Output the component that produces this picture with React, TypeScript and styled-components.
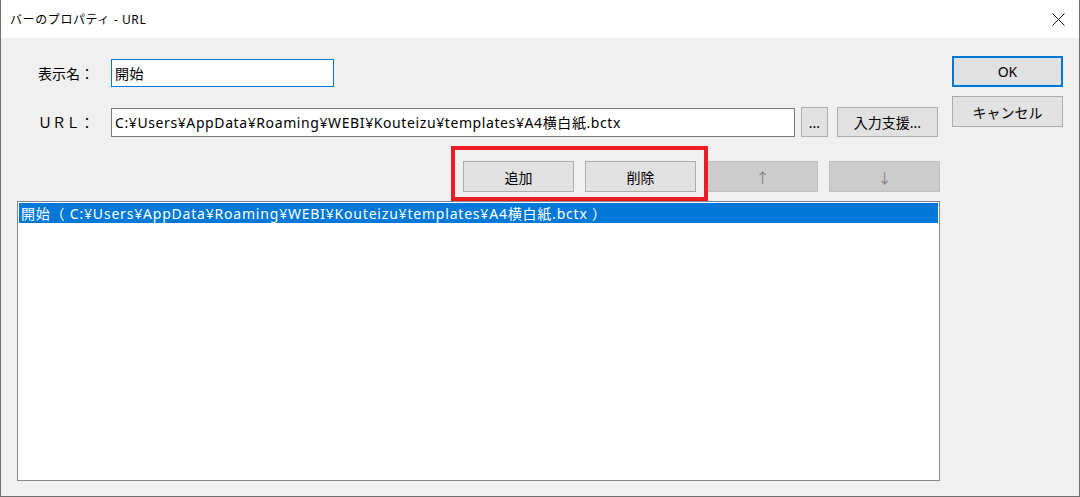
import React from 'react'
import styled, { createGlobalStyle } from 'styled-components'

const GlobalStyle = createGlobalStyle`
  html, body {
    margin: 0;
    padding: 0;
    background: #ffffff;
  }
  body {
    font-family: "Noto Sans", "Noto Sans CJK JP", sans-serif;
    font-size: 14px;
    color: #000000;
  }
`

const Window = styled.div`
  width: 1080px;
  height: 497px;
  box-sizing: border-box;
  border: 1px solid #6f6f6f;
  border-top: none;
  display: flex;
  flex-direction: column;
  background: #f0f0f0;
`

const TitleBar = styled.div`
  height: 38px;
  flex: none;
  background: #ffffff;
  display: flex;
  align-items: center;
  justify-content: space-between;
  padding: 0 14px 0 9px;
  font-size: 12px;
  letter-spacing: 0.6px;
`

const CloseIcon = () => (
  <svg width="13" height="13" viewBox="0 0 13 13">
    <path d="M0.5 0.5 L12.5 12.5 M12.5 0.5 L0.5 12.5" stroke="#111" strokeWidth="1" fill="none" />
  </svg>
)

const Body = styled.div`
  flex: 1;
  display: flex;
`

const Main = styled.div`
  width: 923px;
  padding: 21px 0 0 16px;
  display: flex;
  flex-direction: column;
`

const Side = styled.div`
  padding: 18px 0 0 12px;
  display: flex;
  flex-direction: column;
  gap: 9px;
`

const FieldRow = styled.div<{ $gap: number }>`
  display: flex;
  align-items: center;
  margin-bottom: ${p => p.$gap}px;
`

const Label = styled.div`
  width: 94px;
  box-sizing: border-box;
  padding-left: 21px;
`

const TextInput = styled.div<{ $focused?: boolean; $width: number; $height: number }>`
  width: ${p => p.$width}px;
  height: ${p => p.$height}px;
  box-sizing: border-box;
  background: #ffffff;
  border: 1px solid ${p => (p.$focused ? '#0078d7' : '#7a7a7a')};
  padding: 0 3px;
  display: flex;
  align-items: center;
  white-space: nowrap;
  overflow: hidden;
  letter-spacing: 0.6px;
`

const Button = styled.button<{ $width: number; $height?: number; $primary?: boolean }>`
  width: ${p => p.$width}px;
  height: ${p => p.$height ?? 31}px;
  box-sizing: border-box;
  background: #e1e1e1;
  border: ${p => (p.$primary ? '2px solid #0078d7' : '1px solid #adadad')};
  font-family: inherit;
  font-size: 14px;
  color: #000000;
  padding: 0;
  display: flex;
  align-items: center;
  justify-content: center;
  &:disabled {
    background: #cccccc;
    border-color: #bfbfbf;
    color: #838383;
  }
`

const ButtonRow = styled.div`
  display: flex;
  justify-content: flex-end;
  gap: 11px;
  margin-bottom: 9px;
`

const Highlight = styled.div`
  position: relative;
  display: flex;
  gap: 11px;
  &::after {
    content: '';
    position: absolute;
    top: -15px;
    left: -12px;
    right: -12px;
    bottom: -9px;
    border: 4px solid #ed1c24;
    pointer-events: none;
  }
`

const ListBox = styled.div`
  width: 923px;
  height: 280px;
  box-sizing: border-box;
  border: 1px solid #828790;
  background: #ffffff;
  padding: 1px;
`

const ListItem = styled.div<{ $selected?: boolean }>`
  height: 20px;
  display: flex;
  align-items: center;
  padding-left: 2px;
  white-space: nowrap;
  letter-spacing: 0.8px;
  background: ${p => (p.$selected ? '#0078d7' : 'transparent')};
  color: ${p => (p.$selected ? '#ffffff' : '#000000')};
`

const Fields = styled.div`
  display: flex;
  gap: 9px;
  align-items: center;
  margin-left: 6px;
`

const url = 'C:¥Users¥AppData¥Roaming¥WEBI¥Kouteizu¥templates¥A4横白紙.bctx'

export default function App() {
  return (
    <>
      <GlobalStyle />
      <Window>
        <TitleBar>
          <span>バーのプロパティ - URL</span>
          <CloseIcon />
        </TitleBar>
        <Body>
          <Main>
            <FieldRow $gap={20}>
              <Label>表示名：</Label>
              <TextInput $focused $width={223} $height={28}>開始</TextInput>
            </FieldRow>
            <FieldRow $gap={24}>
              <Label>ＵＲＬ：</Label>
              <TextInput $width={684} $height={29}>{url}</TextInput>
              <Fields>
                <Button $width={27} $height={30}>...</Button>
                <Button $width={101} $height={30}>入力支援...</Button>
              </Fields>
            </FieldRow>
            <ButtonRow>
              <Highlight>
                <Button $width={111}>追加</Button>
                <Button $width={111}>削除</Button>
              </Highlight>
              <Button $width={111} disabled>↑</Button>
              <Button $width={111} disabled>↓</Button>
            </ButtonRow>
            <ListBox>
              <ListItem $selected>開始（ {url} ）</ListItem>
            </ListBox>
          </Main>
          <Side>
            <Button $width={111} $primary>OK</Button>
            <Button $width={111}>キャンセル</Button>
          </Side>
        </Body>
      </Window>
    </>
  )
}
